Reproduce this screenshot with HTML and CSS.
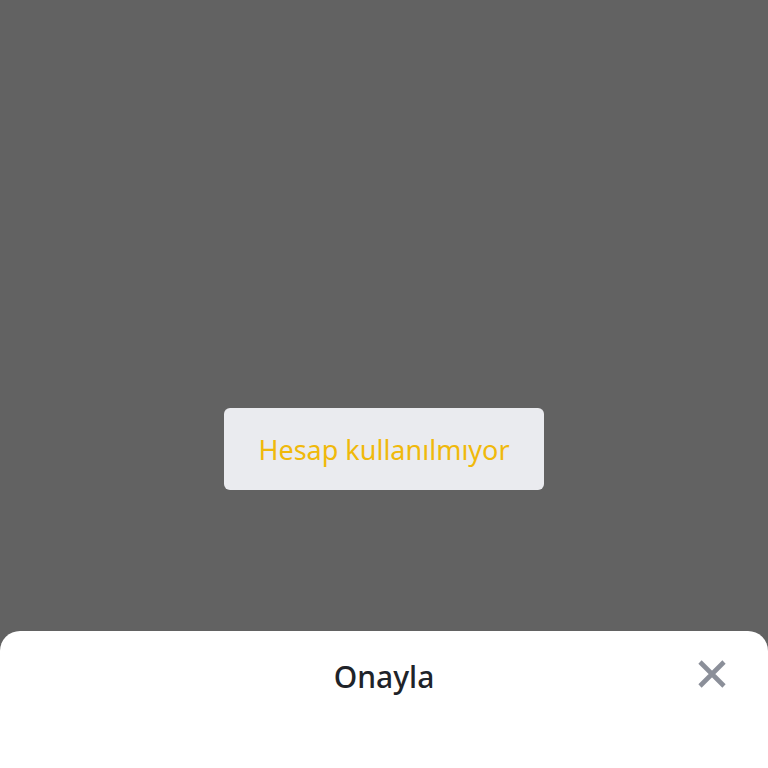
FILE: index.html
```html
<!DOCTYPE html>
<html lang="tr">
<head>
<meta charset="utf-8">
<link rel="stylesheet" href="styles.css">
</head>
<body>
<div class="screen">
  <div class="backdrop">
    <div class="toast">Hesap kullanılmıyor</div>
  </div>
  <div class="sheet">
    <div class="sheet-head">
      <div class="sheet-title">Onayla</div>
      <button class="close" aria-label="Kapat">
        <svg width="30" height="30" viewBox="0 0 30 30"><path d="M3 3 L27 27 M27 3 L3 27" stroke="#8B8F99" stroke-width="4.6" stroke-linecap="butt" fill="none"/></svg>
      </button>
    </div>
  </div>
</div>
</body>
</html>
```
FILE: styles.css
```css
html, body {
  margin: 0;
  padding: 0;
  width: 768px;
  height: 768px;
  overflow: hidden;
  background: #626262;
}
.screen {
  width: 768px;
  height: 768px;
  display: flex;
  flex-direction: column;
}
.backdrop {
  height: 631px;
  display: flex;
  justify-content: center;
  padding-top: 408px;
  box-sizing: border-box;
}
.toast {
  width: 320px;
  height: 82px;
  background: #EAEBEF;
  border-radius: 6px;
  display: flex;
  align-items: center;
  justify-content: center;
  color: #F0B90B;
  font-family: "Noto Sans", sans-serif;
  font-size: 27px;
}
.sheet {
  flex: 1;
  background: #FFFFFF;
  border-radius: 20px 20px 0 0;
}
.sheet-head {
  position: relative;
  height: 96px;
  display: flex;
  justify-content: center;
  align-items: flex-start;
  padding-top: 28px;
  box-sizing: border-box;
}
.sheet-title {
  font-family: "Noto Sans", sans-serif;
  font-size: 30px;
  font-weight: 500;
  color: #1E2329;
  line-height: 36px;
}
.close {
  position: absolute;
  right: 41px;
  top: 28px;
  width: 30px;
  height: 30px;
  padding: 0;
  border: 0;
  background: none;
  display: block;
}
.close svg { display: block; }
```
